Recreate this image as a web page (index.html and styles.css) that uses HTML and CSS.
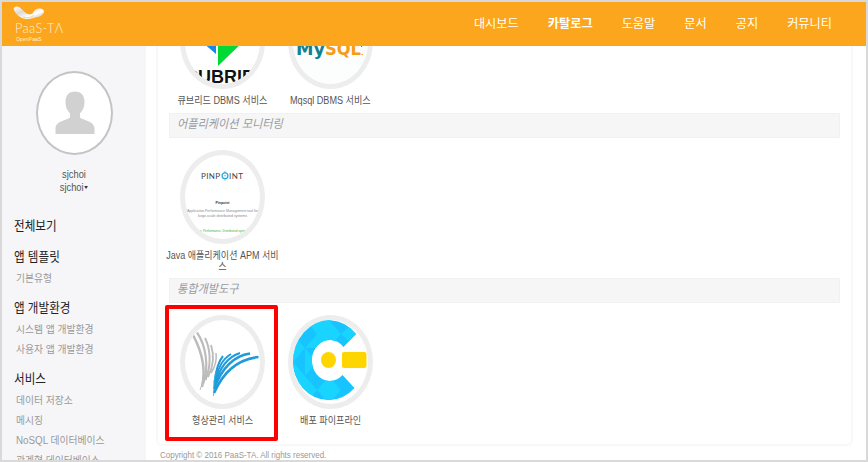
FILE: index.html
```html
<!DOCTYPE html>
<html lang="ko">
<head>
<meta charset="utf-8">
<title>PaaS-TA</title>
<link rel="stylesheet" href="styles.css">
</head>
<body>
<header class="topbar">
  <div class="brand">
    <svg class="swoosh" width="32" height="14" viewBox="0 0 32 14">
      <defs><linearGradient id="silver" x1="0" y1="0" x2="1" y2="1"><stop offset="0" stop-color="#fff"/><stop offset=".35" stop-color="#ddd9d1"/><stop offset=".65" stop-color="#fff"/><stop offset="1" stop-color="#bbb4a9"/></linearGradient></defs>
      <path d="M.5 4C2 .5 6 1 9 4.500c4 4.500 7 6 10.500 4C21 5 24 3 27.500 3.500c4 .5 4.500 4 1.500 6.500-3 2.500-6 2-8.500 3C13 16 4 13 .5 4Z" fill="url(#silver)"/>
      <path d="M10 12q7 2 11-2" fill="none" stroke="#ffd28a"/>
    </svg>
    <div class="brand-name"><span>PaaS-TΛ</span></div>
    <div class="brand-sub">OpenPaaS</div>
  </div>
  <nav class="menu">
    <a>대시보드</a><a class="active">카탈로그</a><a>도움말</a><a>문서</a><a>공지</a><a>커뮤니티</a>
  </nav>
</header>
<div class="main">
  <aside class="sidebar">
    <div class="avatar">
      <svg width="40" height="44" viewBox="0 0 40 44"><path d="M20 .5c6 0 9.500 4 9.500 10 0 6-2 9-4.500 12v4c3 3 14 3 14.500 11V43H.5v-5.500C1 29.500 12 29.500 15 26.500v-4c-2.500-3-4.500-6-4.500-12C10.500 4.500 14 .5 20 .5Z" fill="#d1d1d1"/></svg>
    </div>
    <div class="user"><span>sjchoi</span></div>
    <div class="user second"><span>sjchoi</span><i class="caret"></i></div>
    <ul class="side-nav">
      <li class="head all"><span>전체보기</span></li>
      <li class="head"><span>앱 템플릿</span></li>
      <li><span>기본유형</span></li>
      <li class="head"><span>앱 개발환경</span></li>
      <li><span>시스템 앱 개발환경</span></li>
      <li><span>사용자 앱 개발환경</span></li>
      <li class="head"><span>서비스</span></li>
      <li><span>데이터 저장소</span></li>
      <li><span>메시징</span></li>
      <li><span>NoSQL 데이터베이스</span></li>
      <li><span>관계형 데이터베이스</span></li>
    </ul>
  </aside>
  <main class="content">
    <section class="panel">
      <div class="tiles dbms">
        <div class="tile">
          <div class="disc"><svg viewBox="0 0 75 84">
            <path d="M10 36h21v18Z" fill="#1689e8"/><path d="M33 38h29L33 66Z" fill="#00d936"/>
            <text class="cubrid" x="0" y="83" textLength="70" lengthAdjust="spacingAndGlyphs">CUBRID</text>
          </svg></div>
          <p>큐브리드 DBMS 서비스</p>
        </div>
        <div class="tile">
          <div class="disc"><svg viewBox="0 0 75 84">
            <rect width="75" height="84" fill="#fcfdfd"/>
            <text class="mysql" x="3" y="55" fill="#118091" textLength="29" lengthAdjust="spacingAndGlyphs">My</text>
            <text class="mysql" x="32" y="55" fill="#f79b17" textLength="36" lengthAdjust="spacingAndGlyphs">SQL</text>
            <path d="M68.500 54.500h1.500" stroke="#f79b17"/><path d="M64 44q4 0 5 3" stroke="#118091" fill="none"/>
          </svg></div>
          <p>Mqsql DBMS 서비스</p>
        </div>
      </div>
      <h2><span>어플리케이션 모니터링</span></h2>
      <div class="tiles monitor">
        <div class="tile">
          <div class="disc"><svg viewBox="0 0 75 84">
            <text class="pin" x="16" y="24" textLength="19">PINP</text>
            <circle cx="40" cy="20.800" r="2.900" fill="none" stroke="#29abe2" stroke-width="1.300"/><circle cx="40" cy="20.800" r=".7" fill="#29abe2"/><path d="M40 16v2m0 5.500v2" stroke="#29abe2" stroke-width=".8"/>
            <text class="pin" x="44" y="24" textLength="14">INT</text>
            <text x="37.500" y="48.500" class="tiny strong" textLength="14" lengthAdjust="spacingAndGlyphs">Pinpoint</text>
            <text x="37.500" y="57" class="tiny" textLength="71" lengthAdjust="spacingAndGlyphs">Application Performance Management tool for</text>
            <text x="37.500" y="61.500" class="tiny" textLength="49" lengthAdjust="spacingAndGlyphs">large-scale distributed systems</text>
            <text x="37.500" y="77" class="tiny green" textLength="46" lengthAdjust="spacingAndGlyphs">n, Performance, Distributed syste</text>
          </svg></div>
          <p class="java">Java 애플리케이션 APM 서비<br>스</p>
        </div>
      </div>
      <h2><span>통합개발도구</span></h2>
      <div class="tiles tools">
        <div class="tile picked">
          <div class="disc"><svg viewBox="0 0 75 84">
            <g fill="none" stroke="#bcbcbc">
              <path d="M8 15C15 28 22 46 17 67" stroke-width="2.600"/>
              <path d="M12 12.500C20 24 25 46 18 64" stroke-width="2.200"/>
              <path d="M20 18C25 28 27 44 20.500 60" stroke-width="2"/>
              <path d="M26 25C29 34 29 45 23 57" stroke-width="1.900"/>
              <path d="M31 33C32 40 30 47 26 53" stroke-width="1.500"/>
              <path d="M18 58q-.5 7-3 12" stroke-width="1"/>
            </g>
            <g fill="none" stroke="#1f9bdc" stroke-width="2">
              <path d="M29.500 62C31 50 33 42 38 36"/>
              <path d="M29.500 64C32 50 37 39 46 34"/>
              <path d="M29.500 66C34 49 42 37 55 33" stroke-width="2.300"/>
              <path d="M29 69C36 50 48 36 65 33.500" stroke-width="2.500"/>
              <path d="M29 73C39 50 55 39 73.500 37" stroke-width="2.700"/>
            </g>
            <path d="M28.500 76c0-9 .5-17 2.500-25" stroke="#38b7df" fill="none" stroke-width=".8"/>
          </svg></div>
          <p>형상관리 서비스</p>
        </div>
        <div class="tile">
          <div class="disc"><svg viewBox="0 0 75 84">
            <defs><clipPath id="c-shape"><path d="M63 14A36 40 0 1 0 61.500 68L49.500 55A18 20.500 0 1 1 50.500 27Z"/></clipPath></defs>
            <g clip-path="url(#c-shape)"><rect width="75" height="84" fill="#18c4ff"/><path d="M12 0 24 14 36 0ZM12 28 24 14 36 28ZM36 0 48 14 36 28 24 14ZM0 14 12 28 0 42ZM0 42 12 56 0 70ZM12 56 24 70 12 84 0 70ZM36 56 48 70 36 84 24 70ZM48 14 63 0V28ZM12 28 24 42 12 56Z" fill="#18d4ff"/></g>
            <ellipse cx="35.500" cy="40" rx="7.500" ry="8" fill="#ffd500"/>
            <rect x="49" y="32" width="24.500" height="16" rx="2" fill="#ffd500"/>
          </svg></div>
          <p>배포 파이프라인</p>
        </div>
      </div>
    </section>
    <footer><span>Copyright © 2016 PaaS-TA. All rights reserved.</span></footer>
  </main>
</div>
</body>
</html>
```
FILE: styles.css
```css
*, *::after { box-sizing: border-box; }
body {
  margin: 0;
  width: 868px;
  height: 462px;
  border: 2px solid #d9d9d9;
  overflow: hidden;
  background: #fff;
  font-family: "Liberation Sans", "Noto Sans CJK KR", sans-serif;
  color: #555;
}
.topbar {
  height: 44px;
  background: #fba61c;
  display: flex;
  justify-content: space-between;
}
.brand { padding: 3px 0 0 11px; }
.swoosh { display: block; }
.brand-name {
  margin: 0 0 0 2px;
  font: 300 14px/17px Lato, sans-serif;
  letter-spacing: .4px;
  color: #fff0d4;
}
.brand-name span { display: inline-block; transform-origin: left; transform: scaleX(.91); }
.brand-sub { margin-left: 3px; font-size: 5.2px; line-height: 6px; color: #fff0d4; }
.menu {
  display: flex;
  gap: 29px;
  padding: 0 34px 0 0;
  font: 12.2px/42px "Noto Sans CJK KR", sans-serif;
  color: #fff;
}
.menu .active { font-weight: 700; }
.main { display: flex; height: 414px; }
.sidebar { width: 144px; background: #f6f6f9; overflow: hidden; flex: none; }
.avatar {
  width: 77px;
  height: 84px;
  margin: 25px 0 0 34px;
  border: 2px solid #c4c4c4;
  border-radius: 50%;
  background: #fff;
  display: flex;
  justify-content: center;
  align-items: center;
}
.user { margin-top: 13px; height: 14px; font-size: 10px; line-height: 14px; text-align: center; transform: scaleX(.93); }
.user.second { margin-top: -1px; }
.caret { display: inline-block; margin: 0 0 2px 1px; border: 2.5px solid transparent; border-top: 3px solid #333; border-bottom: 0; }
.side-nav {
  margin: 21px 0 0;
  padding: 0 0 0 14px;
  list-style: none;
  font: 10px/20px "Liberation Sans", "Noto Sans CJK KR", sans-serif;
  color: #999;
}
.side-nav li { height: 20px; white-space: nowrap; }
.side-nav span { display: inline-block; transform-origin: left; transform: scaleX(.98); }
.side-nav .head {
  margin: 9px 0 2px -2px;
  font-size: 13px;
  color: #222;
}
.side-nav .head span { transform: scaleX(.89); }
.side-nav .all { margin-top: 0; margin-bottom: 11px; }
.content { flex: 1; padding: 0 13px 0 10px; background: #fff; overflow: hidden; }
.panel {
  display: flow-root;
  height: 400px;
  padding: 0 11px;
  border: 2px solid #f8f8f8;
  border-top: 0;
  border-radius: 0 0 6px 6px;
}
.tiles { display: flex; margin-left: -1px; }
.dbms { height: 118px; margin-top: -51px; }
.monitor { height: 140px; padding-top: 12px; }
.tools { height: 142px; padding-top: 12px; }
.tile { width: 108px; display: flex; flex-direction: column; align-items: center; position: relative; flex: none; }
.disc {
  width: 85px;
  height: 94px;
  border: 5px solid #ededed;
  border-radius: 50%;
  overflow: hidden;
  flex: none;
}
.disc svg { display: block; width: 75px; height: 84px; }
.tile p {
  margin: 6px 0 0 1px;
  font-size: 10px;
  line-height: 11px;
  text-align: center;
  white-space: nowrap;
  transform: scaleX(.91);
}
.tile .java { margin-left: 0; transform: scaleX(.9); }
.panel h2 {
  margin: 0;
  height: 25px;
  padding-left: 7px;
  background: #f6f6f6;
  border: 1px solid #f1f1f1;
  font: italic 12px/17px "Noto Sans CJK KR", sans-serif;
  color: #999ba3;
}
.panel h2 span { display: inline-block; transform-origin: left; transform: scaleX(.93); }
.picked::after {
  content: "";
  position: absolute;
  left: -3px;
  top: -10px;
  width: 113px;
  height: 136px;
  border: 4px solid #f00;
  border-radius: 2px;
}
footer { margin: 2px 0 0 4px; font-size: 9.5px; line-height: 13px; color: #999; white-space: nowrap; }
footer span { display: inline-block; transform-origin: left; transform: scaleX(.84); }
.cubrid { font: 700 18px "Liberation Sans", sans-serif; fill: #111; }
.mysql { font: 700 17px "DejaVu Sans", sans-serif; }
.pin { font: 8px Lato, sans-serif; fill: #444; }
.tiny { font: 4px "Liberation Sans", sans-serif; fill: #888; text-anchor: middle; }
.strong { font-weight: 700; fill: #333; }
.green { fill: #3fae3f; }
```
